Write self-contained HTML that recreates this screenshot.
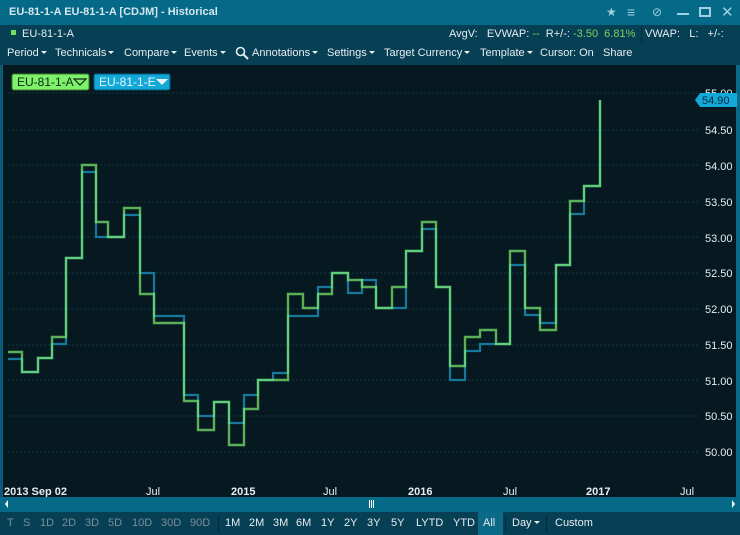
<!DOCTYPE html>
<html><head><meta charset="utf-8"><style>
*{margin:0;padding:0;box-sizing:border-box}
body{width:740px;height:535px;overflow:hidden;background:#061820;font-family:"Liberation Sans",sans-serif;font-size:11px;color:#e6eef2;position:relative}
.abs{position:absolute}
#title{left:0;top:0;width:740px;height:25px;background:#046a87;color:#d6e6ee;font-size:11px;font-weight:bold;line-height:25px;padding-left:9px}
#r2{left:0;top:25px;width:740px;height:18px;background:#073f54}
#r3{left:0;top:43px;width:740px;height:22px;background:#073f54}
.m{position:absolute;top:4px;white-space:nowrap}
.car{display:inline-block;width:0;height:0;border-left:3px solid transparent;border-right:3px solid transparent;border-top:3px solid #e6eef2;vertical-align:2px;margin-left:2px}
#bottom{left:0;top:512px;width:740px;height:23px;background:#073f54}
.b{position:absolute;top:5px;white-space:nowrap}
.g{color:#7a8e98}
</style></head><body>
<div id="title" class="abs">EU-81-1-A EU-81-1-A [CDJM] - Historical
<span style="position:absolute;left:606px;top:0;font-weight:normal;color:#9fd0e0;font-size:12px">★</span>
<span style="position:absolute;left:627px;top:0;font-weight:normal;color:#9fd0e0;font-size:14px">≡</span>
<span style="position:absolute;left:652px;top:0;font-weight:normal;color:#9fd0e0;font-size:12px">⊘</span>
<span style="position:absolute;left:677px;top:13px;width:12px;height:2px;background:#9fd0e0"></span>
<span style="position:absolute;left:699px;top:7px;width:12px;height:10px;border:2px solid #9fd0e0"></span>
<span style="position:absolute;left:721px;top:0;font-weight:normal;color:#9fd0e0;font-size:15px">✕</span>
</div>
<div id="r2" class="abs">
<span style="position:absolute;left:11px;top:5px;width:5px;height:5px;background:#6fe05a"></span>
<span class="m" style="left:22px;top:3px">EU-81-1-A</span>
<span class="m" style="left:449px;top:3px">AvgV: &nbsp;&nbsp;EVWAP: <span style="color:#7fd060">--</span>&nbsp; R+/-: <span style="color:#7fd060">-3.50 &nbsp;6.81%</span></span>
<span style="position:absolute;left:641px;top:1px;width:1px;height:16px;background:#022a38"></span>
<span class="m" style="left:645px;top:3px">VWAP: &nbsp; L: &nbsp; +/-:</span>
</div>
<div id="r3" class="abs">
<span class="m" style="left:7px">Period<span class="car"></span></span>
<span class="m" style="left:55px">Technicals<span class="car"></span></span>
<span class="m" style="left:124px">Compare<span class="car"></span></span>
<span class="m" style="left:184px">Events<span class="car"></span></span>
<svg class="abs" style="left:235px;top:3px" width="14" height="14"><circle cx="5.5" cy="5.5" r="4" fill="none" stroke="#e6eef2" stroke-width="1.6"/><line x1="8.5" y1="8.5" x2="13" y2="13" stroke="#e6eef2" stroke-width="2"/></svg>
<span class="m" style="left:252px">Annotations<span class="car"></span></span>
<span class="m" style="left:327px">Settings<span class="car"></span></span>
<span class="m" style="left:384px">Target Currency<span class="car"></span></span>
<span class="m" style="left:480px">Template<span class="car"></span></span>
<span class="m" style="left:540px">Cursor: On</span>
<span class="m" style="left:603px">Share</span>
</div>
<div class="abs" style="left:0;top:65px;width:3px;height:432px;background:#0b5a78"></div>
<div class="abs" style="left:736px;top:65px;width:4px;height:447px;background:#0b6a8a"></div>
<svg class="abs" style="left:0;top:0" width="740" height="512">
<g stroke="#12384a" stroke-width="1" stroke-dasharray="2,2">
<line x1="8" y1="93" x2="700" y2="93"/><line x1="8" y1="130" x2="700" y2="130"/><line x1="8" y1="165" x2="700" y2="165"/><line x1="8" y1="202" x2="700" y2="202"/><line x1="8" y1="237" x2="700" y2="237"/><line x1="8" y1="273" x2="700" y2="273"/><line x1="8" y1="309" x2="700" y2="309"/><line x1="8" y1="345" x2="700" y2="345"/><line x1="8" y1="380" x2="700" y2="380"/><line x1="8" y1="416" x2="700" y2="416"/><line x1="8" y1="452" x2="700" y2="452"/>
</g>
<g fill="#e6eef2" font-size="11">
<text x="705" y="97">55.00</text><text x="705" y="134">54.50</text><text x="705" y="170">54.00</text><text x="705" y="206">53.50</text><text x="705" y="242">53.00</text><text x="705" y="277">52.50</text><text x="705" y="313">52.00</text><text x="705" y="349">51.50</text><text x="705" y="385">51.00</text><text x="705" y="420">50.50</text><text x="705" y="456">50.00</text>
</g>
<polyline fill="none" stroke="#16789a" stroke-width="2.2" points="8,359 22,359 22,372 38,372 38,358 52,358 52,344 66,344 66,258 82,258 82,172 96,172 96,237 124,237 124,215 140,215 140,273 154,273 154,316 184,316 184,395 198,395 198,416 214,416 214,402 229,402 229,423 244,423 244,395 258,395 258,380 273,380 273,373 288,373 288,316 318,316 318,287 332,287 332,273 348,273 348,293 362,293 362,280 376,280 376,308 406,308 406,251 422,251 422,229 436,229 436,287 450,287 450,380 465,380 465,351 480,351 480,344 496,344 496,344 510,344 510,265 525,265 525,315 540,315 540,323 556,323 556,265 570,265 570,214 584,214 584,186 600,186 600,100"/>
<polyline fill="none" stroke="#84f870" stroke-opacity="0.68" stroke-width="2.4" points="8,352 22,352 22,372 38,372 38,358 52,358 52,337 66,337 66,258 82,258 82,165 96,165 96,222 108,222 108,237 124,237 124,208 140,208 140,294 154,294 154,323 184,323 184,401 198,401 198,430 214,430 214,402 229,402 229,445 244,445 244,409 258,409 258,380 288,380 288,294 303,294 303,308 318,308 318,294 332,294 332,273 348,273 348,280 362,280 362,287 376,287 376,308 392,308 392,287 406,287 406,251 422,251 422,222 436,222 436,287 450,287 450,366 465,366 465,337 480,337 480,330 496,330 496,344 510,344 510,251 525,251 525,308 540,308 540,330 556,330 556,265 570,265 570,201 584,201 584,186 600,186 600,100"/>
<polygon points="695,100 700,93 737,93 737,107 700,107" fill="#12a8d8"/>
<text x="702" y="104" font-size="11" fill="#062a3a">54.90</text>
<rect x="12" y="74" width="77" height="16" rx="2" fill="#7ef06a" stroke="#3a7a30"/>
<text x="17" y="86" font-size="12" fill="#0a2a10">EU-81-1-A</text>
<polygon points="74,79 86,79 80,85" fill="none" stroke="#0a2a10" stroke-width="1.2"/>
<rect x="94" y="74" width="76" height="16" rx="2" fill="#12a8d8" stroke="#0a5a78"/>
<text x="99" y="86" font-size="12" fill="#eaf6fb">EU-81-1-E</text>
<polygon points="156,79 168,79 162,85" fill="#eaf6fb"/>
<g fill="#e6eef2" font-size="11" font-weight="bold">
<text x="4" y="495">2013 Sep 02</text><text x="146" y="495" font-weight="normal">Jul</text><text x="231" y="495">2015</text><text x="323" y="495" font-weight="normal">Jul</text><text x="408" y="495">2016</text><text x="503" y="495" font-weight="normal">Jul</text><text x="586" y="495">2017</text><text x="680" y="495" font-weight="normal">Jul</text>
</g>
<rect x="0" y="497" width="740" height="15" fill="#046a87"/>
<polygon points="5,504 8,500 8,508" fill="#fff"/><polygon points="735,504 732,500 732,508" fill="#fff"/>
<rect x="369" y="500" width="1" height="8" fill="#fff"/><rect x="371" y="500" width="1" height="8" fill="#fff"/><rect x="373" y="500" width="1" height="8" fill="#fff"/>
</svg>
<div id="bottom" class="abs">
<span class="b g" style="left:7px">T</span><span class="b g" style="left:23px">S</span><span class="b g" style="left:40px">1D</span><span class="b g" style="left:62px">2D</span><span class="b g" style="left:85px">3D</span><span class="b g" style="left:108px">5D</span><span class="b g" style="left:132px">10D</span><span class="b g" style="left:161px">30D</span><span class="b g" style="left:190px">90D</span>
<span style="position:absolute;left:218px;top:3px;width:1px;height:17px;background:#022a38"></span>
<span class="b" style="left:225px">1M</span><span class="b" style="left:249px">2M</span><span class="b" style="left:273px">3M</span><span class="b" style="left:296px">6M</span><span class="b" style="left:321px">1Y</span><span class="b" style="left:344px">2Y</span><span class="b" style="left:367px">3Y</span><span class="b" style="left:391px">5Y</span><span class="b" style="left:416px">LYTD</span><span class="b" style="left:453px">YTD</span>
<span style="position:absolute;left:478px;top:0;width:25px;height:23px;background:#0a6a88"></span><span class="b" style="left:483px">All</span>
<span style="position:absolute;left:505px;top:3px;width:1px;height:17px;background:#022a38"></span>
<span class="b" style="left:512px">Day<span class="car"></span></span>
<span style="position:absolute;left:546px;top:3px;width:1px;height:17px;background:#022a38"></span>
<span class="b" style="left:555px">Custom</span>
</div>
</body></html>
